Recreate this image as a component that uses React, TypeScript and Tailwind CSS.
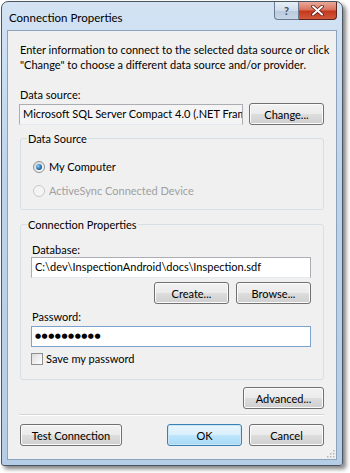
import React from "react";

const btn =
  "h-[22px] rounded-[3px] border border-[#707070] bg-[linear-gradient(180deg,#f2f2f2_0%,#ebebeb_48%,#dddddd_52%,#cfcfcf_100%)] shadow-[inset_0_0_0_1px_#fbfbfb] text-[11px] text-black flex items-center justify-center leading-none";

function Radio({ checked, disabled }: { checked?: boolean; disabled?: boolean }) {
  return (
    <span
      className={
        disabled
          ? "w-[12px] h-[12px] rounded-full border border-[#c9c9c9] bg-[#f4f4f4] flex items-center justify-center shrink-0"
          : "w-[12px] h-[12px] rounded-full border border-[#8e8f8f] bg-[linear-gradient(135deg,#d6d6d6,#ffffff)] flex items-center justify-center shrink-0"
      }
    >
      {checked && (
        <span className="w-[6px] h-[6px] rounded-full bg-[radial-gradient(circle_at_35%_35%,#8fd0f5,#1c6aa8_60%,#0e3d6a)]" />
      )}
    </span>
  );
}

export default function App() {
  return (
    <div className="w-[350px] h-[473px] bg-white font-['Lato',sans-serif] text-[11px] text-black">
      <div className="ml-[1px] mt-[1px] w-[342px] h-[465px] flex flex-col border border-[#4b5663] rounded-t-[7px] rounded-b-[3px] bg-[linear-gradient(180deg,#d3e3f4_0%,#bcd3eb_40%,#b6cde7_100%)] shadow-[3px_3px_4px_rgba(0,0,0,0.5)] px-[5px] pb-[5px]">
        {/* title bar */}
        <div className="h-[28px] flex items-start justify-between">
          <div className="pl-[2px] pt-[8px] text-[11.5px] leading-[15px] text-black">
            Connection Properties
          </div>
          <div className="flex">
            <div className="w-[25px] h-[18px] rounded-bl-[4px] border border-t-0 border-[#6b7b8f] bg-[linear-gradient(180deg,#e6eef7_0%,#cfdcea_50%,#b9c9dc_51%,#c8d6e6_100%)] flex items-center justify-center text-[11px] font-bold text-[#3d4b5c] leading-none">
              ?
            </div>
            <div className="w-[38px] h-[18px] rounded-br-[4px] border border-t-0 border-l-0 border-[#5e2418] bg-[linear-gradient(180deg,#e9a99b_0%,#d8705a_48%,#c4361c_52%,#d2583c_100%)] flex items-center justify-center">
              <svg width="13" height="11" viewBox="0 0 13 11">
                <path d="M2 1.5 L11 9.5 M11 1.5 L2 9.5" stroke="#5a1a10" strokeWidth="3.6" strokeLinecap="round" />
                <path d="M2 1.5 L11 9.5 M11 1.5 L2 9.5" stroke="#ffffff" strokeWidth="2" strokeLinecap="round" />
              </svg>
            </div>
          </div>
        </div>

        {/* client area */}
        <div className="flex-1 bg-[#f0f0f0] border border-[#8da2bd] flex flex-col pl-[11px] pr-[12px] relative">
          <div className="pt-[11px] pl-[1px] leading-[15px] whitespace-nowrap">
            Enter information to connect to the selected data source or click
            <br />
            "Change" to choose a different data source and/or provider.
          </div>

          <div className="mt-[15px] pl-[1px] leading-[15px]">Data source:</div>
          <div className="mt-[1px] flex items-center">
            <div className="flex-1 min-w-0 h-[21px] border border-[#abadb3] border-b-[#e3e9ef] bg-[#f4f4f4] pl-[3px] flex items-center overflow-hidden whitespace-nowrap">
              Microsoft SQL Server Compact 4.0 (.NET Framework Data Provider for Microsoft SQL Server Compact 4.0)
            </div>
            <button className={btn + " w-[75px] ml-[6px] shrink-0"}>Change...</button>
          </div>

          {/* Data Source group */}
          <fieldset className="mt-[6px] ml-[1px] border border-[#d5dfe5] rounded-[3px] p-0">
            <legend className="ml-[6px] px-[1px] leading-[15px]">Data Source</legend>
            <div className="pl-[12px] pt-[13px] pb-[11px] flex flex-col gap-[9px]">
              <label className="flex items-center gap-[4px] leading-[15px]">
                <Radio checked />
                My Computer
              </label>
              <label className="flex items-center gap-[4px] leading-[15px] text-[#a0a0a0]">
                <Radio disabled />
                ActiveSync Connected Device
              </label>
            </div>
          </fieldset>

          {/* Connection Properties group */}
          <fieldset className="mt-[7px] ml-[1px] border border-[#d5dfe5] rounded-[3px] p-0">
            <legend className="ml-[6px] px-[1px] leading-[15px]">Connection Properties</legend>
            <div className="pl-[10px] pr-[12px] pt-[10px] pb-[13px] flex flex-col">
              <div className="pl-[1px] leading-[15px]">Database:</div>
              <div className="h-[21px] border border-[#abadb3] border-b-[#e3e9ef] bg-white pl-[3px] flex items-center whitespace-nowrap overflow-hidden">
                C:\dev\InspectionAndroid\docs\Inspection.sdf
              </div>
              <div className="mt-[4px] flex justify-end gap-[7px]">
                <button className={btn + " w-[75px]"}>Create...</button>
                <button className={btn + " w-[75px]"}>Browse...</button>
              </div>
              <div className="mt-[5px] pl-[1px] leading-[15px]">Password:</div>
              <div className="mt-[2px] h-[21px] border border-[#7da2ce] bg-white pl-[3px] flex items-center text-[7px] tracking-[0.5px] leading-none font-['DejaVu_Sans',sans-serif]">
                ●●●●●●●●●●
              </div>
              <label className="mt-[4px] flex items-center gap-[3px] leading-[15px]">
                <span className="w-[12px] h-[12px] border border-[#8e8f8f] bg-[linear-gradient(135deg,#dcdcdc,#ffffff)] shrink-0" />
                Save my password
              </label>
            </div>
          </fieldset>

          <div className="mt-[7px] flex justify-end">
            <button className={btn + " w-[81px]"}>Advanced...</button>
          </div>

          <div className="mt-[5px] border-t border-[#d5d5d5] border-b border-b-white" />

          <div className="mt-[8px] flex items-center">
            <button className={btn + " w-[102px] ml-[1px]"}>Test Connection</button>
            <div className="flex-1" />
            <button className="h-[22px] w-[75px] rounded-[3px] border border-[#3c7fb1] bg-[linear-gradient(180deg,#eaf6fd_0%,#d9f0fc_48%,#bee6fd_52%,#a7d9f5_100%)] shadow-[inset_0_0_0_1px_#c8e8fa] text-[11px] flex items-center justify-center leading-none">
              OK
            </button>
            <button className={btn + " w-[75px] ml-[7px]"}>Cancel</button>
          </div>

          <svg className="absolute right-[1px] bottom-[1px]" width="10" height="10" viewBox="0 0 10 10">
            {[
              [8, 2],
              [8, 5],
              [5, 5],
              [8, 8],
              [5, 8],
              [2, 8],
            ].map(([x, y], i) => (
              <rect key={i} x={x} y={y} width="1.5" height="1.5" fill="#b5b5b5" />
            ))}
          </svg>
        </div>
      </div>
    </div>
  );
}
